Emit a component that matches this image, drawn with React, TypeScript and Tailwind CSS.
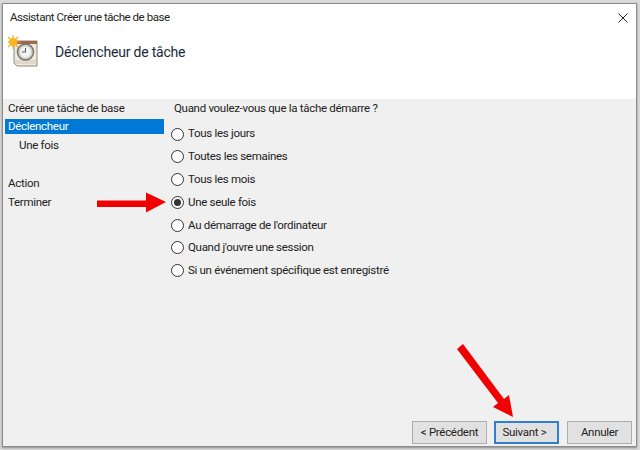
const options = [
  { label: "Tous les jours" },
  { label: "Toutes les semaines" },
  { label: "Tous les mois" },
  { label: "Une seule fois", checked: true },
  { label: "Au démarrage de l'ordinateur" },
  { label: "Quand j'ouvre une session" },
  { label: "Si un événement spécifique est enregistré" },
];

function TaskIcon() {
  return (
    <svg width="32" height="32" viewBox="0 0 32 32">
      <path d="M6 6h23v25H9l-3-3z" fill="#efe9dc" stroke="#8f8a80" />
      <rect x="6" y="6" width="23" height="3" fill="#a06a42" />
      <path d="M7 26h21M7 28h21" stroke="#cfc9bb" />
      <circle cx="17.5" cy="17" r="8" fill="#cfcfcc" stroke="#77736b" strokeWidth="1.5" />
      <circle cx="17.5" cy="17" r="5.5" fill="#f2f4f6" />
      <path d="M17.5 13v4h-3.5" fill="none" stroke="#55524c" strokeWidth="1" />
      <g stroke="#f5a81c" strokeWidth="1.2">
        <path d="M5 0v14M-2 7h14M0 2l10 10M10 2L0 12" />
      </g>
      <circle cx="5" cy="7" r="4" fill="#fbb41f" />
    </svg>
  );
}

function Radio({ checked }: { checked?: boolean }) {
  return (
    <span className="flex h-[13px] w-[13px] items-center justify-center rounded-full border border-[#333] bg-white">
      {checked && <span className="h-[7px] w-[7px] rounded-full bg-[#333]" />}
    </span>
  );
}

function WizardButton({ label, width, primary }: { label: string; width: string; primary?: boolean }) {
  return (
    <button
      className={`h-[23px] text-[11.5px] tracking-[-0.3px] text-[#222] ${width} ${
        primary ? "border-2 border-[#2f7fcb] bg-[#e1e1e1] pr-[4px]" : "border border-[#adadad] bg-[#e1e1e1]"
      }`}
    >
      {label}
    </button>
  );
}

export default function App() {
  return (
    <div className="h-[450px] w-[640px] overflow-hidden bg-[#d9d9d9] pb-[3px] pl-[2px] pr-[3px] pt-[3px] font-['Roboto',sans-serif]">
      <div className="relative flex h-full flex-col border border-[#8c8c8c] bg-[#f0f0f0] shadow-[0_1px_2px_#888]">
        <div className="flex h-[95px] flex-col bg-white">
          <div className="mb-[3px] flex h-[28px] items-center justify-between pl-[7px] pr-[8px] text-[11.5px] tracking-[-0.45px] text-[#222]">
            <span>Assistant Créer une tâche de base</span>
            <svg width="10" height="10" viewBox="0 0 10 10">
              <path d="M0.5 0.5l9 9M9.5 0.5l-9 9" stroke="#222" strokeWidth="1" />
            </svg>
          </div>
          <div className="flex items-center pl-[5px]">
            <TaskIcon />
            <span className="ml-[15px] mt-[2px] text-[14px] tracking-[-0.2px] text-[#1a2a3a]">Déclencheur de tâche</span>
          </div>
        </div>
        <div className="flex flex-1">
          <div className="w-[161px] text-[11.5px] tracking-[-0.3px] text-[#222]">
            <div className="mb-[1px] flex h-[19px] items-center pl-[5px]">Créer une tâche de base</div>
            <div className="ml-[2px] flex h-[15px] items-center bg-[#0078d7] pl-[3px] text-white">Déclencheur</div>
            <div className="flex h-[23px] items-center pl-[16px]">Une fois</div>
            <div className="mt-[17px] flex h-[19px] items-center pl-[5px]">Action</div>
            <div className="flex h-[19px] items-center pl-[5px]">Terminer</div>
          </div>
          <div className="flex-1 pl-[7px] pt-[2px] text-[11.5px] tracking-[-0.3px] text-[#222]">
            <div className="mb-[8px] flex h-[16px] items-center pl-[3px]">Quand voulez-vous que la tâche démarre ?</div>
            <div className="flex flex-col gap-[4.8px]">
              {options.map((o) => (
                <div key={o.label} className="flex h-[18px] items-center gap-[4px]">
                  <Radio checked={o.checked} />
                  <span>{o.label}</span>
                </div>
              ))}
            </div>
          </div>
        </div>
        <div className="flex justify-end pb-[2px] pr-[4px]">
          <WizardButton label="< Précédent" width="w-[75px]" />
          <div className="w-[7px]" />
          <WizardButton label="Suivant >" width="w-[65px]" primary />
          <div className="w-[8px]" />
          <WizardButton label="Annuler" width="w-[65px]" />
        </div>
        {/* red annotation arrows */}
        <svg className="absolute left-[-3px] top-[-4px]" width="640" height="450" viewBox="0 0 640 450">
          <path d="M97 200.500h49v-8l20 9.500-20 10.500v-5.500H97z" fill="#f00000" />
          <path d="M457 349l6-5 41 55 5-4 4 22-20-10 5-4z" fill="#f00000" />
        </svg>
      </div>
    </div>
  );
}
